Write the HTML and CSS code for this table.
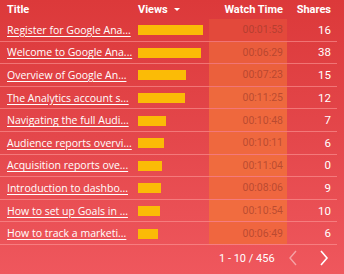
FILE: index.html
```html
<!DOCTYPE html>
<html>
<head>
<meta charset="utf-8">
<link rel="stylesheet" href="styles.css">
</head>
<body>
<div class="page">
  <div class="table">
    <div class="row head">
      <div class="c title">Title</div>
      <div class="c views">Views <span class="tri"></span></div>
      <div class="c wt">Watch Time</div>
      <div class="c sh">Shares</div>
    </div>
    <div class="row"><div class="c title"><a>Register for Google Ana...</a></div><div class="c views"><span class="bar" style="width:65px"></span></div><div class="c wt cell" style="background:#e3493b">00:01:53</div><div class="c sh">16</div></div>
    <div class="row"><div class="c title"><a>Welcome to Google Ana...</a></div><div class="c views"><span class="bar" style="width:63px"></span></div><div class="c wt cell" style="background:#ea5d3c">00:06:29</div><div class="c sh">38</div></div>
    <div class="row"><div class="c title"><a>Overview of Google An...</a></div><div class="c views"><span class="bar" style="width:48px"></span></div><div class="c wt cell" style="background:#eb603c">00:07:23</div><div class="c sh">15</div></div>
    <div class="row"><div class="c title"><a>The Analytics account s...</a></div><div class="c views"><span class="bar" style="width:47px"></span></div><div class="c wt cell" style="background:#ee693d">00:11:25</div><div class="c sh">12</div></div>
    <div class="row"><div class="c title"><a>Navigating the full Audi...</a></div><div class="c views"><span class="bar" style="width:28px"></span></div><div class="c wt cell" style="background:#ef683d">00:10:48</div><div class="c sh">7</div></div>
    <div class="row"><div class="c title"><a>Audience reports overvi...</a></div><div class="c views"><span class="bar" style="width:26px"></span></div><div class="c wt cell" style="background:#ef683e">00:10:11</div><div class="c sh">6</div></div>
    <div class="row"><div class="c title"><a>Acquisition reports ove...</a></div><div class="c views"><span class="bar" style="width:24px"></span></div><div class="c wt cell" style="background:#f06b3e">00:11:04</div><div class="c sh">0</div></div>
    <div class="row"><div class="c title"><a>Introduction to dashbo...</a></div><div class="c views"><span class="bar" style="width:23px"></span></div><div class="c wt cell" style="background:#ef663f">00:08:06</div><div class="c sh">9</div></div>
    <div class="row"><div class="c title"><a>How to set up Goals in ...</a></div><div class="c views"><span class="bar" style="width:22px"></span></div><div class="c wt cell" style="background:#f16c3f">00:10:54</div><div class="c sh">10</div></div>
    <div class="row"><div class="c title"><a>How to track a marketi...</a></div><div class="c views"><span class="bar" style="width:20px"></span></div><div class="c wt cell" style="background:#f0663f">00:06:49</div><div class="c sh">6</div></div>
    <div class="pager">
      <span class="range">1 - 10 / 456</span>
      <svg class="chev dim" width="10" height="16" viewBox="0 0 10 16"><path d="M8 1 L2 8 L8 15" fill="none" stroke="#fff" stroke-width="1.4"/></svg>
      <svg class="chev" width="10" height="16" viewBox="0 0 10 16"><path d="M2 1 L8 8 L2 15" fill="none" stroke="#fff" stroke-width="1.6"/></svg>
    </div>
  </div>
</div>
</body>
</html>
```
FILE: styles.css
```css
html, body { margin: 0; padding: 0; }
body {
  width: 344px;
  height: 274px;
  overflow: hidden;
  background: linear-gradient(180deg, #dc393a 0%, #e4474b 50%, #ef575d 100%);
  font-family: Roboto, "Liberation Sans", sans-serif;
  color: #fff;
}
.page { width: 344px; height: 274px; }
.table { width: 337px; }
.row {
  display: flex;
  height: 22.6px;
  align-items: stretch;
  border-bottom: 1px solid rgba(255, 160, 160, 0.55);
  box-sizing: border-box;
}
.row.head {
  height: 19px;
  border-bottom: none;
  font-weight: 700;
  font-size: 11px;
}
.c { display: flex; align-items: center; box-sizing: border-box; }
.title { width: 138px; padding-left: 7px; }
.title a {
  font-family: "Open Sans", "Noto Sans", sans-serif;
  font-size: 10.5px;
  color: #fff;
  text-decoration: underline;
  text-underline-offset: 2px;
  white-space: nowrap;
}
.views { width: 71px; }
.tri {
  display: inline-block;
  width: 0; height: 0;
  border-left: 3px solid transparent;
  border-right: 3px solid transparent;
  border-top: 3px solid #fff;
  margin-left: 6px;
}
.bar { display: block; height: 10px; margin-top: 1px; background: #fbbb06; }
.wt { width: 78px; justify-content: flex-end; padding-right: 4px; font-size: 11px; }
.cell {
  color: rgba(150, 55, 40, 0.6);
  font-size: 10.5px;
}
.sh { flex: 1; justify-content: flex-end; padding-right: 6px; font-size: 11.5px; }
.head .sh { font-size: 11px; }
.pager {
  display: flex;
  align-items: center;
  height: 25px;
  padding-top: 1px;
  font-size: 11px;
}
.range { margin-left: 219px; width: 69px; }
.chev { display: block; }
.chev.dim { opacity: 0.45; }
.chev + .chev { margin-left: 21px; }
```
